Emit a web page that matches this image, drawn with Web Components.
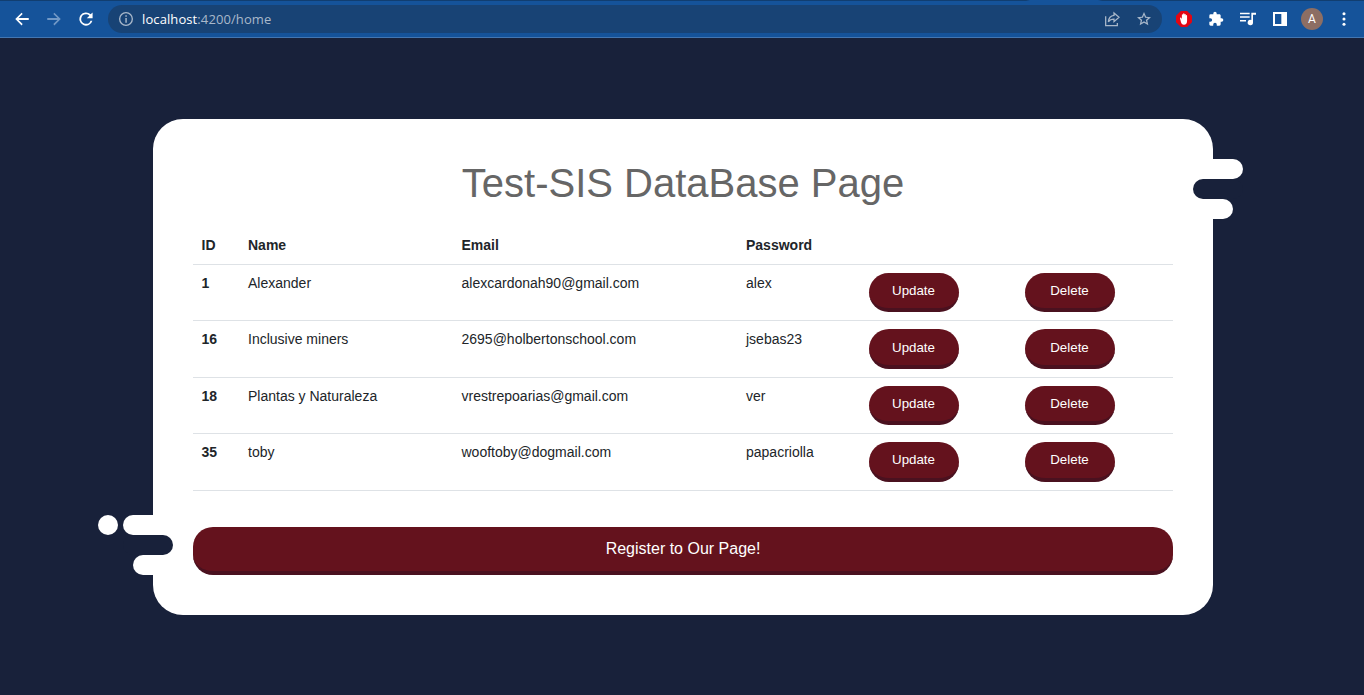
<!DOCTYPE html>
<html lang="en">
<head>
<meta charset="utf-8">
<title>Test-SIS</title>
<style>
html,body{margin:0;height:100%;background:#18213a;overflow:hidden}
body{font-family:"Liberation Sans",Arial,sans-serif}
</style>
</head>
<body>
<app-window></app-window>
<script>
const define = (name, html, setup) => {
  const t = document.createElement('template');
  t.innerHTML = html;
  customElements.define(name, class extends HTMLElement {
    constructor() {
      super();
      this.attachShadow({mode: 'open'}).append(t.content.cloneNode(true));
    }
    connectedCallback() { if (setup) setup(this, this.shadowRoot); }
  });
};

const icons = {
  back: '<path d="M21 10.800H7.400l5.500-5.500L11.500 3.500l-8.500 8.500 8.500 8.500 1.400-1.800-5.500-5.500H21z"/>',
  forward: '<path d="M3 10.800h13.600l-5.500-5.500 1.400-1.800L21 12l-8.500 8.500-1.400-1.800 5.500-5.500H3z"/>',
  reload: '<path d="M18.200 5.800A8.800 8.800 0 1 0 20.500 14.200h-2.500A6.400 6.400 0 1 1 12 5.600c1.800 0 3.300.7 4.500 1.900L13 11h7.800V3.200z"/>',
  info: '<path d="M11 6.500h2.200v2.300H11zm0 4h2.200v7H11zM12 1.500a10.500 10.500 0 1 0 0 21 10.500 10.500 0 0 0 0-21zm0 19a8.500 8.500 0 1 1 0-17 8.500 8.500 0 0 1 0 17z"/>',
  share: '<path fill="none" stroke="currentColor" stroke-width="1.900" d="M2.500 8v14h17.500V18M15 3l7.500 6.500L15 16v-3.800c-4 0-6.500 1-8.500 4C7 11 9.500 7 15 6.500z"/>',
  star: '<path d="m22.500 9.240-7.400-.700L12 1.600 8.900 8.540 1.500 9.240l5.600 4.900L5.500 21.500 12 17.600l6.500 3.900-1.600-7.360zM12 15.400l-3.760 2.270 1-4.280-3.320-2.880 4.380-.380L12 6.100l1.710 4.040 4.380.380-3.320 2.880 1 4.280z"/>',
  puzzle: '<path d="M20.500 11H19V7c0-1.100-.9-2-2-2h-4V3.500a2.500 2.500 0 0 0-5 0V5H4a2 2 0 0 0-2 2v3.800h1.500a2.700 2.700 0 0 1 0 5.400H2V20c0 1.100.9 2 2 2h3.800v-1.500a2.700 2.700 0 0 1 5.400 0V22H17a2 2 0 0 0 2-2v-4h1.500a2.500 2.500 0 0 0 0-5z"/>',
  queue: '<path d="M0 2.500h14.500v2.300H0zm0 5.500h14.500v2.300H0zM0 13.500h9v2.300H0zM17 2.500h7v3h-4.500v11.800a4 4 0 1 1-2.500-3.700z"/>',
  panel: '<path d="M1.500 1.500h21v21h-21zM4.500 4.500v15h9.500v-15z" fill-rule="evenodd"/>',
  menu: '<circle cx="12" cy="4" r="2.300"/><circle cx="12" cy="12" r="2.300"/><circle cx="12" cy="20" r="2.300"/>',
  block: '<path fill="#e30613" d="M7.300 0h9.400L24 7.300v9.400L16.700 24H7.300L0 16.700V7.300z"/><path d="M6 11c0-1.500 1.800-1.500 2.200 0l.6 1.500V5.800c.1-1.300 1.700-1.300 1.900 0V4.500c.1-1.400 1.900-1.400 2 0v1c.1-1.300 1.900-1.300 2 0V7c.2-1.200 1.800-1.200 1.900 0V14.500c0 4-1.600 6-4.700 6-2.500 0-3.700-1-4.400-3.500z"/>'
};

define('tool-icon', `<style>
:host{display:flex;flex:none;align-items:center;justify-content:center;width:var(--size,16px);height:var(--size,16px)}
svg{width:100%;height:100%;fill:currentColor;display:block}
</style><svg viewBox="0 0 24 24"></svg>`, (el, root) => {
  root.querySelector('svg').innerHTML = icons[el.getAttribute('name')];
});

define('address-bar', `<style>
:host{display:flex;align-items:center;box-sizing:border-box;width:1054px;height:28px;border-radius:14px;background:#184375;padding:0 10px;color:#a9b8ca}
.url{flex:1;font:13px/20px "Open Sans","Noto Sans",sans-serif;margin-left:8px;letter-spacing:.1px}
b{font-weight:400;color:#fff}
.share{margin-right:16px}
</style>
<tool-icon name="info"></tool-icon>
<span class="url"><b>localhost</b>:4200/home</span>
<tool-icon class="share" name="share"></tool-icon>
<tool-icon name="star"></tool-icon>`);

define('browser-toolbar', `<style>
:host{display:flex;align-items:center;box-sizing:border-box;height:38px;background:linear-gradient(90deg,#113e70 1026px,#15539a 1030px 1098px,#113e70 1102px) 0 0/100% 1px no-repeat #15539a;padding-top:1px;border-bottom:1px solid #4376b1;padding-left:13px;color:#fff}
.nav{--size:18px;margin-right:14px}
.dim{color:#7299c6}
.reload{margin-right:13px}
.tools{display:flex;align-items:center;gap:16px;margin-left:14px}
.avatar{width:22px;height:22px;border-radius:50%;background:#8d6e63;font:12px/23px Roboto,sans-serif;text-align:center;margin:0 -3px}
</style>
<tool-icon class="nav" name="back"></tool-icon>
<tool-icon class="nav dim" name="forward"></tool-icon>
<tool-icon class="nav reload" name="reload"></tool-icon>
<address-bar></address-bar>
<div class="tools">
<tool-icon name="block"></tool-icon>
<tool-icon name="puzzle"></tool-icon>
<tool-icon name="queue"></tool-icon>
<tool-icon name="panel"></tool-icon>
<span class="avatar">A</span>
<tool-icon name="menu"></tool-icon>
</div>`);

define('pill-button', `<style>
:host{display:block}
button{display:block;box-sizing:border-box;width:var(--w,90px);height:var(--h,39.400px);border:0;border-bottom:4px solid #4a111f;border-radius:20px;background:#64121d;color:#fff;font:var(--fs,13.333px)/21px "Liberation Sans",Arial,sans-serif;padding:0 0 var(--pb,0);text-align:center}
</style><button><slot></slot></button>`);

define('user-row', `<style>
:host{display:grid;grid-template-columns:46.500px 213.500px 284.500px 123px 156px 156.500px;box-sizing:border-box;border-bottom:1px solid #dee2e6;font-size:14px;line-height:21px;color:#212529}
div{padding:8px 8px 8px 8.500px}
div:nth-of-type(n+5){padding-left:8px}
.id,:host([head]) div{font-weight:700}
</style><div class="id"></div><div></div><div></div><div></div><div></div><div></div>`, (el, root) => {
  const cells = root.querySelectorAll('div');
  (el.getAttribute('data') || '').split('|').forEach((v, i) => cells[i].textContent = v);
  if (!el.hasAttribute('head')) ['Update', 'Delete'].forEach((v, i) => {
    const b = document.createElement('pill-button');
    b.textContent = v;
    cells[4 + i].append(b);
  });
});

define('user-card', `<style>
:host{display:block;position:relative;box-sizing:border-box;width:1060px;height:496px;padding:40px;border-radius:30px;background:#fff}
h1{margin:0 0 20px;height:48px;font-weight:400;font-size:40px;line-height:48px;color:#666;text-align:center}
.register{margin-top:36px;--w:980px;--h:48px;--fs:16px;--pb:1px}
i{position:absolute;height:20px;border-radius:10px;background:#fff}
.dark{background:#18213a}
.r1{left:1020px;top:40px;width:70px}
.r2{left:1040px;top:60px;width:50px}
.r3{left:1020px;top:80px;width:60px}
.l0{left:-55px;top:396px;width:20px}
.l1{left:-30px;top:396px;width:70px}
.l2{left:-30px;top:416px;width:50px}
.l3{left:-20px;top:436px;width:60px}
</style>
<i class="r1"></i><i class="r2 dark"></i><i class="r3"></i>
<i class="l0"></i><i class="l1"></i><i class="l2 dark"></i><i class="l3"></i>
<h1>Test-SIS DataBase Page</h1>
<user-row head data="ID|Name|Email|Password"></user-row>
<user-row data="1|Alexander|alexcardonah90@gmail.com|alex"></user-row>
<user-row data="16|Inclusive miners|2695@holbertonschool.com|jsebas23"></user-row>
<user-row data="18|Plantas y Naturaleza|vrestrepoarias@gmail.com|ver"></user-row>
<user-row data="35|toby|wooftoby@dogmail.com|papacriolla"></user-row>
<pill-button class="register">Register to Our Page!</pill-button>`);

define('app-window', `<style>
:host{display:block;height:100%}
main{padding:81px 0 0 153px}
</style>
<browser-toolbar></browser-toolbar>
<main><user-card></user-card></main>`);
</script>
</body>
</html>
